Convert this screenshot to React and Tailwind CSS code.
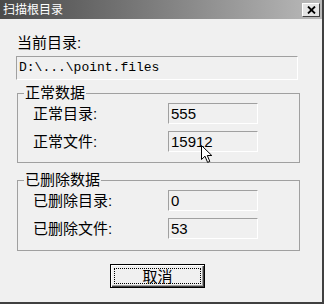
import React from 'react'

const font = "font-['Liberation_Sans','Noto_Sans_CJK_SC',sans-serif]"

const Field = ({ value }) => (
  <div className="w-[90px] h-[21px] flex items-center pl-[2px] border-t border-l border-t-[#a0a0a0] border-l-[#a0a0a0] border-b border-r border-b-white border-r-white text-[15px] leading-none text-black">
    {value}
  </div>
)

const Row = ({ label, value, className = '' }) => (
  <div className={`flex items-center h-[21px] pl-[15px] ${className}`}>
    <div className="w-[135px] text-[15px] leading-none text-black">{label}</div>
    <Field value={value} />
  </div>
)

const Group = ({ title, rows, className = '', bottom = 'pb-[10px]' }) => (
  <fieldset className={`w-[283px] ml-[1px] border border-[#a0a0a0] ${bottom} ${className}`}>
    <legend className="ml-[6px] px-[1px] h-[16px] leading-[16px] text-[15px] text-black">{title}</legend>
    <Row label={rows[0][0]} value={rows[0][1]} className="mt-[2px]" />
    <Row label={rows[1][0]} value={rows[1][1]} className="mt-[7px]" />
  </fieldset>
)

const Cursor = () => (
  <svg className="absolute left-[201px] top-[145px]" width="13" height="19" viewBox="0 0 13 19">
    <path
      d="M0.5 0.5 L0.5 14.5 L4 11.2 L6.6 17.4 L8.8 16.4 L6.3 10.5 L10.8 10.5 Z"
      fill="#fff"
      stroke="#000"
      strokeWidth="1"
      strokeLinejoin="miter"
    />
  </svg>
)

export default function App() {
  return (
    <div className={`relative w-[324px] h-[304px] bg-[#f0f0f0] border-r-2 border-b-2 border-r-[#404040] border-b-[#404040] overflow-hidden ${font}`}>
      <div className="h-[19px] flex items-center pl-[3px] bg-linear-to-r from-[#4a4a4a] to-[#bababa]">
        <span className="text-white text-[12px] leading-none">扫描根目录</span>
        <div className="ml-auto mr-[2px] w-[18px] h-[14px] bg-[#e4e4e4] border border-t-white border-l-white border-b-[#404040] border-r-[#404040] flex items-center justify-center">
          <svg width="9" height="8" viewBox="0 0 9 8">
            <path d="M1 0.5 L8 7.5 M8 0.5 L1 7.5" stroke="#000" strokeWidth="1.8" />
          </svg>
        </div>
      </div>

      <div className="pl-[16px] flex flex-col">
        <div className="mt-[12px] h-[23px] leading-[23px] pl-[1px] text-[15px] text-black">当前目录:</div>
        <div className="mt-[2px] w-[282px] h-[24px] flex items-center pl-[2px] border-t border-l border-t-[#a0a0a0] border-l-[#a0a0a0] border-b border-r border-b-white border-r-white font-['Liberation_Mono',monospace] text-[13px] text-black">
          D:\...\point.files
        </div>

        <Group
          title="正常数据"
          className="mt-[5px]"
          rows={[
            ['正常目录:', '555'],
            ['正常文件:', '15912'],
          ]}
        />
        <Group
          title="已删除数据"
          className="mt-[9px]"
          bottom="pb-[11px]"
          rows={[
            ['已删除目录:', '0'],
            ['已删除文件:', '53'],
          ]}
        />

        <div className="mt-[13px] ml-[94px]">
          <button className="w-[95px] h-[24px] border border-black bg-[#f0f0f0] p-0 shadow-[inset_1px_1px_0_#fff,inset_-1px_-1px_0_#404040,inset_-2px_-2px_0_#a0a0a0]">
            <div className="m-[3px] h-[16px] border border-dotted border-black flex items-center justify-center text-[15px] leading-none text-black">
              取消
            </div>
          </button>
        </div>
      </div>

      <Cursor />
    </div>
  )
}
